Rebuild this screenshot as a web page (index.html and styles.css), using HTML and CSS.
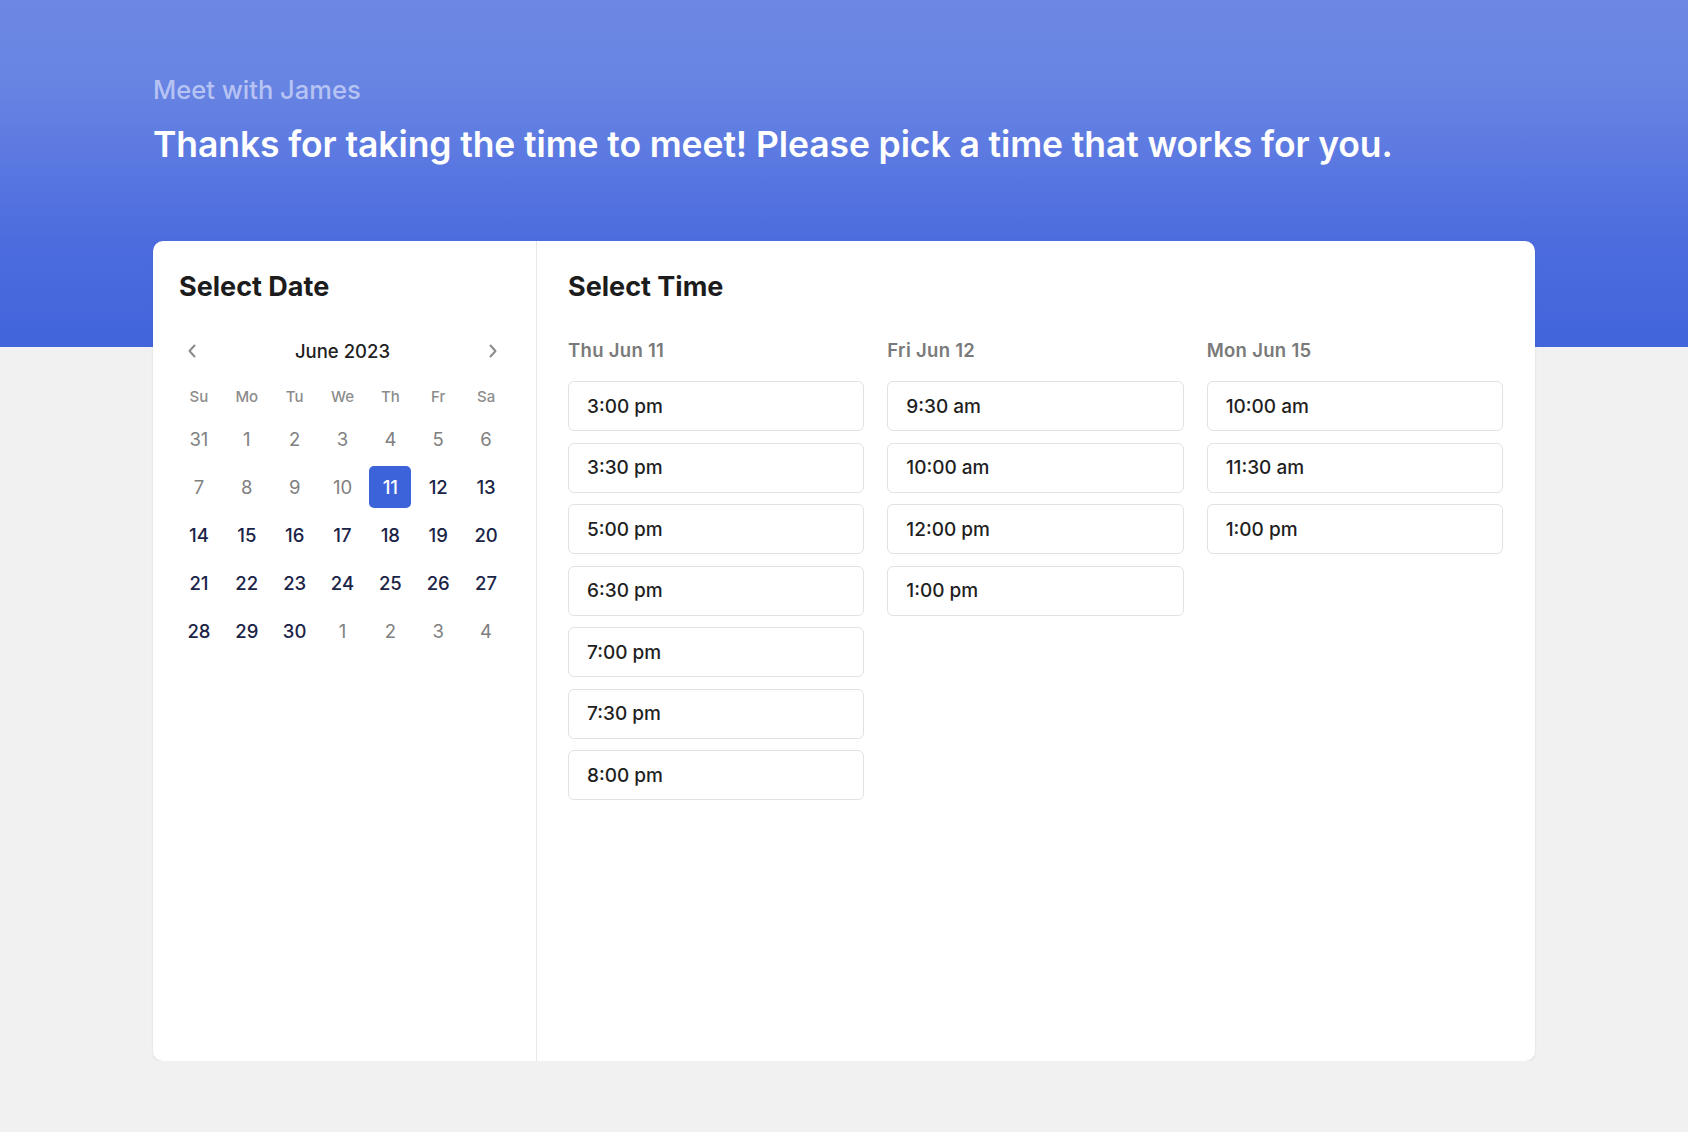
FILE: index.html
```html
<!DOCTYPE html>
<html lang="en">
  <head>
    <meta charset="UTF-8" />
    <meta name="viewport" content="width=device-width, initial-scale=1.0" />
    <title>Meet with James</title>
    <link rel="stylesheet" href="styles.css">
  </head>
  <body>
    <header class="hero">
      <div class="hero-content">
        <p class="host">Meet with James</p>
        <h1>Thanks for taking the time to meet! Please pick a time that works for you.</h1>
      </div>
    </header>

    <main class="booking-card">
      <section class="date-panel">
        <h2>Select Date</h2>
        <div class="month-nav">
          <button class="nav-btn" aria-label="Previous month">
            <svg width="10" height="14" viewBox="0 0 10 14"><path d="M7.5 1.5 2.5 7l5 5.5" fill="none" stroke="#8a8a8a" stroke-width="2" stroke-linecap="round" stroke-linejoin="round"/></svg>
          </button>
          <span class="month-label">June 2023</span>
          <button class="nav-btn" aria-label="Next month">
            <svg width="10" height="14" viewBox="0 0 10 14"><path d="M2.5 1.5 7.5 7l-5 5.5" fill="none" stroke="#8a8a8a" stroke-width="2" stroke-linecap="round" stroke-linejoin="round"/></svg>
          </button>
        </div>
        <div class="calendar" id="calendar">
          <span class="weekday">Su</span>
          <span class="weekday">Mo</span>
          <span class="weekday">Tu</span>
          <span class="weekday">We</span>
          <span class="weekday">Th</span>
          <span class="weekday">Fr</span>
          <span class="weekday">Sa</span>

          <span class="day muted">31</span>
          <span class="day muted">1</span>
          <span class="day muted">2</span>
          <span class="day muted">3</span>
          <span class="day muted">4</span>
          <span class="day muted">5</span>
          <span class="day muted">6</span>

          <span class="day muted">7</span>
          <span class="day muted">8</span>
          <span class="day muted">9</span>
          <span class="day muted">10</span>
          <span class="day"><span class="day-num selected">11</span></span>
          <span class="day">12</span>
          <span class="day">13</span>

          <span class="day">14</span>
          <span class="day">15</span>
          <span class="day">16</span>
          <span class="day">17</span>
          <span class="day">18</span>
          <span class="day">19</span>
          <span class="day">20</span>

          <span class="day">21</span>
          <span class="day">22</span>
          <span class="day">23</span>
          <span class="day">24</span>
          <span class="day">25</span>
          <span class="day">26</span>
          <span class="day">27</span>

          <span class="day">28</span>
          <span class="day">29</span>
          <span class="day">30</span>
          <span class="day muted">1</span>
          <span class="day muted">2</span>
          <span class="day muted">3</span>
          <span class="day muted">4</span>
        </div>
      </section>

      <section class="time-panel">
        <h2>Select Time</h2>
        <div class="time-columns">
          <div class="time-column">
            <h3>Thu Jun 11</h3>
            <button class="slot">3:00 pm</button>
            <button class="slot">3:30 pm</button>
            <button class="slot">5:00 pm</button>
            <button class="slot">6:30 pm</button>
            <button class="slot">7:00 pm</button>
            <button class="slot">7:30 pm</button>
            <button class="slot">8:00 pm</button>
          </div>
          <div class="time-column">
            <h3>Fri Jun 12</h3>
            <button class="slot">9:30 am</button>
            <button class="slot">10:00 am</button>
            <button class="slot">12:00 pm</button>
            <button class="slot">1:00 pm</button>
          </div>
          <div class="time-column">
            <h3>Mon Jun 15</h3>
            <button class="slot">10:00 am</button>
            <button class="slot">11:30 am</button>
            <button class="slot">1:00 pm</button>
          </div>
        </div>
      </section>
    </main>
  </body>
</html>
```

FILE: styles.css
```css
* {
  margin: 0;
  padding: 0;
  box-sizing: border-box;
}

body {
  font-family: 'Inter', 'Liberation Sans', sans-serif;
  background-color: #f1f1f1;
  color: #1f1f1f;
}

button {
  font-family: inherit;
  background: none;
  border: none;
  cursor: pointer;
}

.hero {
  height: 347px;
  background: linear-gradient(180deg, #6c88e4 0%, #6985e3 22%, #4c6cde 70%, #4264dc 100%);
}
.hero-content {
  padding: 74px 0 0 153px;
}
.host {
  font-size: 25.5px;
  line-height: 32px;
  font-weight: 500;
  color: #b6c3f3;
  margin-bottom: 16px;
}
.hero h1 {
  font-size: 35.5px;
  line-height: 46px;
  font-weight: 600;
  color: #ffffff;
  letter-spacing: -0.1px;
}

.booking-card {
  display: flex;
  width: 1382px;
  height: 820px;
  margin: -106px 0 0 153px;
  background: #ffffff;
  border-radius: 10px;
  box-shadow: 0 1px 3px rgba(0, 0, 0, 0.08);
}

.booking-card h2 {
  font-size: 27px;
  line-height: 32px;
  font-weight: 700;
  color: #1c1c1c;
}

.date-panel {
  width: 384px;
  flex-shrink: 0;
  padding: 30px 26px 0 22px;
  border-right: 1px solid #e8e8e8;
}
.date-panel h2 {
  margin-left: 4px;
}

.month-nav {
  display: flex;
  align-items: center;
  justify-content: space-between;
  height: 36px;
  margin-top: 30px;
  margin-bottom: 8px;
}
.nav-btn {
  width: 34px;
  height: 34px;
  display: flex;
  align-items: center;
  justify-content: center;
}
.month-label {
  font-size: 18.5px;
  font-weight: 500;
  color: #1f1f1f;
}

.calendar {
  display: grid;
  grid-template-columns: repeat(7, 1fr);
  grid-template-rows: 38px;
  grid-auto-rows: 48px;
}
.weekday {
  display: flex;
  align-items: center;
  justify-content: center;
  font-size: 15px;
  font-weight: 500;
  color: #8c8c8c;
}
.day {
  display: flex;
  align-items: center;
  justify-content: center;
  font-size: 18.5px;
  font-weight: 500;
  color: #1b2447;
}
.day.muted {
  color: #808080;
  font-weight: 400;
}
.day-num {
  display: flex;
  align-items: center;
  justify-content: center;
  width: 42px;
  height: 42px;
  border-radius: 5px;
}
.day-num.selected {
  background-color: #3d63da;
  color: #ffffff;
}

.time-panel {
  flex: 1;
  padding: 30px 32px 0 31px;
}
.time-columns {
  display: grid;
  grid-template-columns: repeat(3, 1fr);
  gap: 23px;
  margin-top: 35px;
}
.time-column h3 {
  font-size: 18.5px;
  line-height: 24px;
  font-weight: 600;
  letter-spacing: 0.3px;
  color: #7a7a7a;
  margin-bottom: 19px;
}
.slot {
  display: flex;
  align-items: center;
  width: 100%;
  height: 50px;
  padding-left: 18px;
  margin-bottom: 11.5px;
  border: 1px solid #e2e2e2;
  border-radius: 6px;
  background: #ffffff;
  font-size: 19px;
  font-weight: 500;
  color: #1f1f1f;
  text-align: left;
}
.slot:hover {
  border-color: #3d63da;
}
```
